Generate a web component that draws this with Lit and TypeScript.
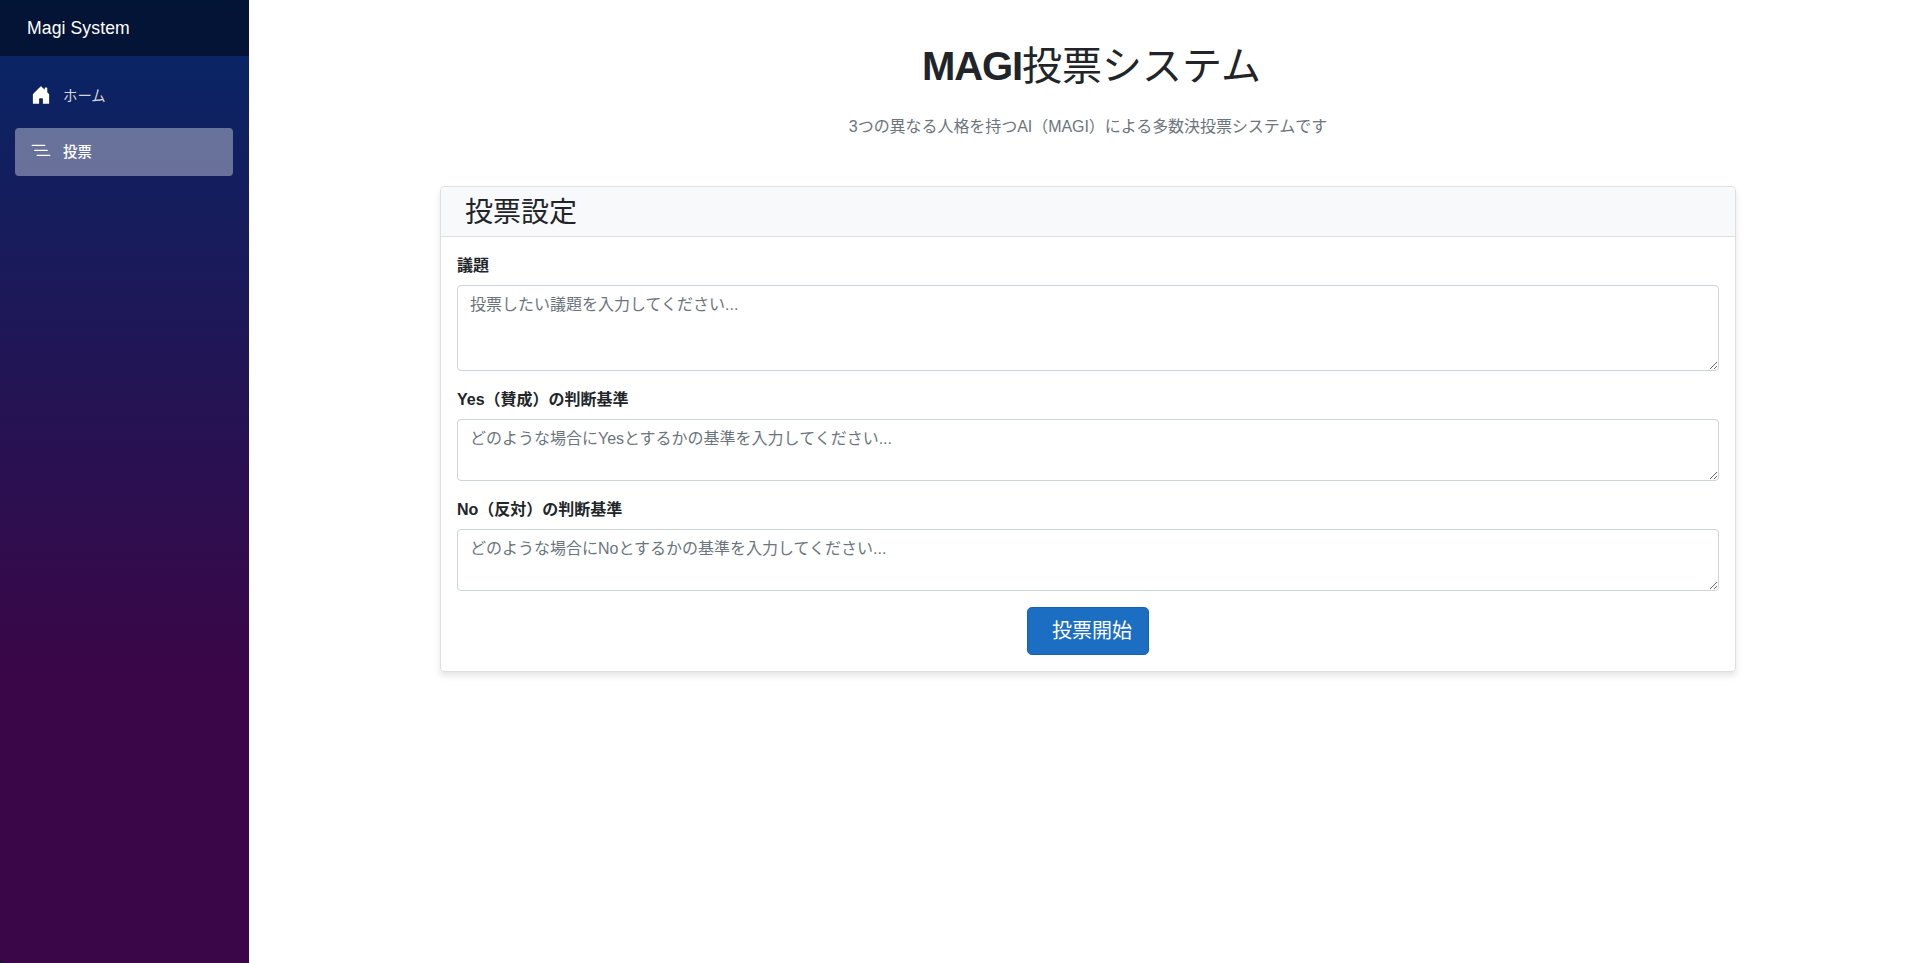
import { LitElement, html, css } from "lit";
import { customElement } from "lit/decorators.js";

@customElement("nav-sidebar")
class NavSidebar extends LitElement {
  static styles = css`
    :host {
      display: block;
      width: 249px;
      flex: none;
      background: #10162a;
    }
    .panel {
      height: 100%;
      background: linear-gradient(180deg, rgb(5, 39, 103) 0%, #3a0647 70%);
      border-bottom-left-radius: 5px;
    }
    .top {
      height: 55.5px;
      box-sizing: border-box;
      padding: 1px 0 0 27px;
      display: flex;
      align-items: center;
      background: rgba(0, 0, 0, 0.46);
      color: #fff;
      font-size: 17.6px;
      letter-spacing: 0.1px;
    }
    nav {
      padding: 16px 16px 0 15px;
      display: grid;
      gap: 8px;
    }
    .link {
      height: 48px;
      border-radius: 4px;
      display: flex;
      align-items: center;
      padding-left: 16px;
      color: #d7d7d7;
      font-size: 14.4px;
      text-decoration: none;
    }
    .link.active {
      background: rgba(255, 255, 255, 0.37);
      color: #fff;
      font-weight: 500;
    }
    svg {
      width: 20px;
      height: 20px;
      margin: 0 12px 2px 0;
      fill: #fff;
    }
  `;
  render() {
    return html`
      <div class="panel">
        <div class="top">Magi System</div>
        <nav>
          <a class="link">
            <svg viewBox="0 0 16 16">
              <path d="M6.5 14.5v-3.505c0-.245.25-.495.5-.495h2c.25 0 .5.25.5.5v3.5a.5.5 0 0 0 .5.5h4a.5.5 0 0 0 .5-.5v-7a.5.5 0 0 0-.146-.354L13 5.793V2.5a.5.5 0 0 0-.5-.5h-1a.5.5 0 0 0-.5.5v1.293L8.354 1.146a.5.5 0 0 0-.708 0l-6 6A.5.5 0 0 0 1.5 7.5v7a.5.5 0 0 0 .5.5h4a.5.5 0 0 0 .5-.5Z"/>
            </svg>
            ホーム
          </a>
          <a class="link active">
            <svg viewBox="0 0 16 16">
              <path fill-rule="evenodd" d="M4.5 11.5A.5.5 0 0 1 5 11h10a.5.5 0 0 1 0 1H5a.5.5 0 0 1-.5-.5zm-2-4A.5.5 0 0 1 3 7h10a.5.5 0 0 1 0 1H3a.5.5 0 0 1-.5-.5zm-2-4A.5.5 0 0 1 1 3h10a.5.5 0 0 1 0 1H1a.5.5 0 0 1-.5-.5z"/>
            </svg>
            投票
          </a>
        </nav>
      </div>
    `;
  }
}

const FIELDS = [
  { label: "議題", rows: 3, hint: "投票したい議題を入力してください..." },
  { label: "Yes（賛成）の判断基準", rows: 2, hint: "どのような場合にYesとするかの基準を入力してください..." },
  { label: "No（反対）の判断基準", rows: 2, hint: "どのような場合にNoとするかの基準を入力してください..." },
];

@customElement("app-root")
class AppRoot extends LitElement {
  static styles = css`
    :host {
      display: flex;
      height: 963px;
      overflow: hidden;
      background: #fff;
      color: #212529;
      font: 16px/24px "Liberation Sans", "Noto Sans CJK JP", sans-serif;
    }
    main {
      flex: 1;
      display: flex;
      flex-direction: column;
      align-items: center;
      padding: 42px 0 0 11px;
    }
    h1 {
      margin: 0 0 24px;
      padding-left: 7px;
      font-size: 40px;
      line-height: 48px;
      font-weight: 400;
    }
    h1 b {
      letter-spacing: -1.1px;
    }
    .lead {
      margin: 0;
      padding-top: 1px;
      color: #6c757d;
      letter-spacing: -0.05px;
    }
    .card {
      box-sizing: border-box;
      width: 1296px;
      margin-top: 46.6px;
      border: 1px solid rgba(0, 0, 0, 0.125);
      border-radius: 4px;
      box-shadow: 0 4px 6px rgba(0, 0, 0, 0.1);
    }
    .head {
      padding: 9px 24px 7px;
      background: #f8f9fa;
      border-bottom: 1px solid #dee2e6;
      border-radius: 3px 3px 0 0;
    }
    h3 {
      margin: 0;
      font-size: 28px;
      line-height: 33.6px;
      font-weight: 400;
    }
    .body {
      padding: 16px;
      display: grid;
      gap: 16px;
    }
    label {
      display: grid;
      gap: 8px;
      font-weight: 700;
    }
    .name {
      padding-top: 1px;
      height: 23px;
    }
    textarea {
      box-sizing: border-box;
      width: 100%;
      margin: 0;
      padding: 7px 12px 5px;
      border: 1px solid #ced4da;
      border-radius: 4px;
      font: inherit;
      font-weight: 400;
      background: #fff;
      resize: vertical;
    }
    textarea::placeholder {
      color: #6c757d;
      opacity: 1;
    }
    button {
      justify-self: center;
      height: 48px;
      padding: 0 16px 0 24px;
      border: 1px solid #1861ac;
      border-radius: 4.8px;
      background: #1b6ec2;
      color: #fff;
      font: inherit;
      font-size: 20px;
    }
  `;
  render() {
    return html`
      <nav-sidebar></nav-sidebar>
      <main>
        <h1><b>MAGI</b>投票システム</h1>
        <p class="lead">3つの異なる人格を持つAI（MAGI）による多数決投票システムです</p>
        <section class="card">
          <div class="head"><h3>投票設定</h3></div>
          <div class="body">
            ${FIELDS.map(
              (f) => html`<label
                ><span class="name">${f.label}</span
                ><textarea rows=${f.rows} placeholder=${f.hint}></textarea
              ></label>`
            )}
            <button>投票開始</button>
          </div>
        </section>
      </main>
    `;
  }
}
